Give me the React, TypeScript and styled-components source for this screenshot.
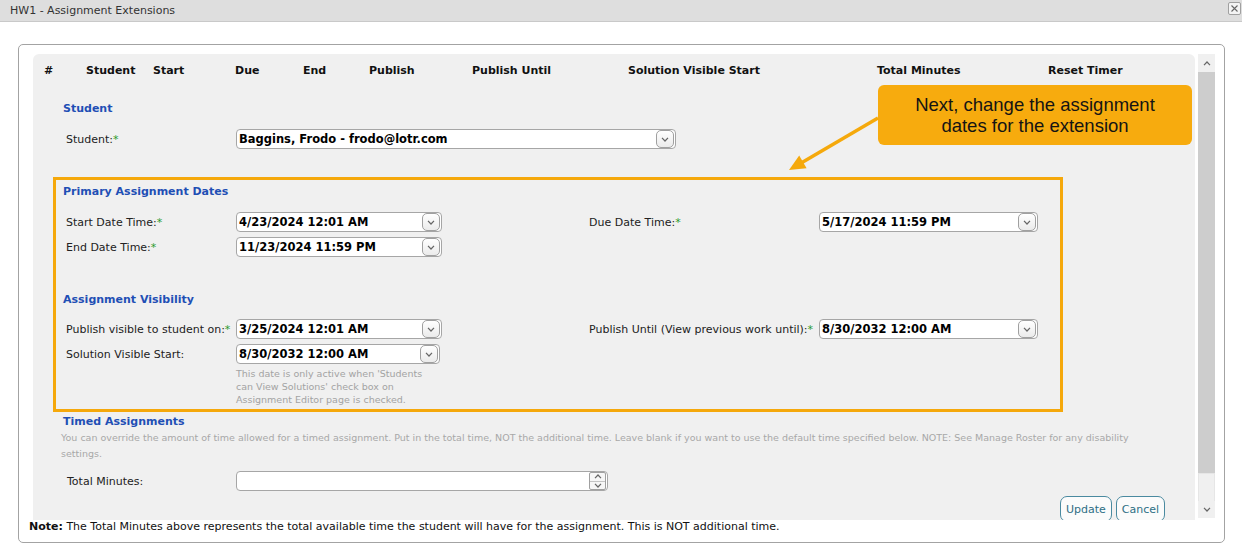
import React from 'react';
import styled, { createGlobalStyle } from 'styled-components';

const GlobalStyle = createGlobalStyle`
  html, body {
    margin: 0;
    padding: 0;
    background: #fff;
  }
  body {
    font-family: 'DejaVu Sans', Verdana, sans-serif;
    font-size: 11px;
    color: #222;
  }
  * {
    box-sizing: border-box;
  }
`;

const Chevron = ({ up }: { up?: boolean }) => (
  <svg width="8" height="5" viewBox="0 0 8 5">
    <path
      d={up ? 'M1 4.2 L4 1 L7 4.2' : 'M1 0.8 L4 4 L7 0.8'}
      fill="none"
      stroke="#666"
      strokeWidth="1.2"
    />
  </svg>
);

function DateSelect({ value, width }: { value: string; width: number }) {
  return (
    <SelectBox $width={width}>
      <SelectValue>{value}</SelectValue>
      <DropButton>
        <Chevron />
      </DropButton>
    </SelectBox>
  );
}

function Label({ text, required }: { text: string; required?: boolean }) {
  return (
    <FieldLabel>
      {text}
      {required && <Req>*</Req>}
    </FieldLabel>
  );
}

const columns = [
  '#',
  'Student',
  'Start',
  'Due',
  'End',
  'Publish',
  'Publish Until',
  'Solution Visible Start',
  'Total Minutes',
  'Reset Timer',
];

export default function App() {
  return (
    <>
      <GlobalStyle />
      <TitleBar>
        <TitleText>HW1 - Assignment Extensions</TitleText>
        <CloseButton>
          <svg width="9" height="9" viewBox="0 0 9 9">
            <path d="M1.5 1.5 L7.5 7.5 M7.5 1.5 L1.5 7.5" stroke="#666" strokeWidth="1.1" />
          </svg>
        </CloseButton>
      </TitleBar>

      <Dialog>
        <ScrollArea>
          <Panel>
            <HeaderRow>
              {columns.map((c) => (
                <span key={c}>{c}</span>
              ))}
            </HeaderRow>

            <Body>
              <Section>
                <SectionTitle>Student</SectionTitle>
                <FieldRow $cols="170px 440px" $top={12}>
                  <Label text="Student:" required />
                  <DateSelect value="Baggins, Frodo - frodo@lotr.com" width={440} />
                </FieldRow>
              </Section>

              <DatesBox>
                <SectionTitle $top={0}>Primary Assignment Dates</SectionTitle>
                <FieldRow $top={12}>
                  <Label text="Start Date Time:" required />
                  <DateSelect value="4/23/2024 12:01 AM" width={206} />
                  <span />
                  <Label text="Due Date Time:" required />
                  <DateSelect value="5/17/2024 11:59 PM" width={219} />
                </FieldRow>
                <FieldRow $top={5}>
                  <Label text="End Date Time:" required />
                  <DateSelect value="11/23/2024 11:59 PM" width={206} />
                </FieldRow>

                <SectionTitle $top={35}>Assignment Visibility</SectionTitle>
                <FieldRow $top={11}>
                  <Label text="Publish visible to student on:" required />
                  <DateSelect value="3/25/2024 12:01 AM" width={206} />
                  <span />
                  <Label text="Publish Until (View previous work until):" required />
                  <DateSelect value="8/30/2032 12:00 AM" width={219} />
                </FieldRow>
                <FieldRow $top={5}>
                  <Label text="Solution Visible Start:" />
                  <DateSelect value="8/30/2032 12:00 AM" width={204} />
                </FieldRow>
                <Hint>
                  This date is only active when 'Students
                  <br />
                  can View Solutions' check box on
                  <br />
                  Assignment Editor page is checked.
                </Hint>
              </DatesBox>

              <Section>
                <SectionTitle $top={2}>Timed Assignments</SectionTitle>
                <OverrideText>
                  You can override the amount of time allowed for a timed assignment. Put in the total
                  time, NOT the additional time. Leave blank if you want to use the default time
                  specified below. NOTE: See Manage Roster for any disability
                  <br />
                  settings.
                </OverrideText>
                <FieldRow $cols="169px 372px" $top={9} $pad={4}>
                  <FieldLabel>Total Minutes:</FieldLabel>
                  <NumberBox>
                    <Spinner>
                      <SpinHalf>
                        <Chevron up />
                      </SpinHalf>
                      <SpinHalf>
                        <Chevron />
                      </SpinHalf>
                    </Spinner>
                  </NumberBox>
                </FieldRow>
              </Section>

              <Actions>
                <ActionButton>Update</ActionButton>
                <ActionButton>Cancel</ActionButton>
              </Actions>
            </Body>

            <Callout>
              Next, change the assignment
              <br />
              dates for the extension
            </Callout>
            <Arrow width="100" height="66" viewBox="0 0 100 66">
              <line x1="93" y1="6" x2="17" y2="50.4" stroke="#f5a90c" strokeWidth="3.5" />
              <polygon points="4,58 21.6,56.2 14.2,43.6" fill="#f5a90c" />
            </Arrow>
          </Panel>

          <Scrollbar>
            <ScrollArrow $h={18}>
              <Chevron up />
            </ScrollArrow>
            <Thumb />
            <Track />
            <ScrollArrow $h={17}>
              <Chevron />
            </ScrollArrow>
          </Scrollbar>
        </ScrollArea>

        <Note>
          <b>Note:</b> The Total Minutes above represents the total available time the student will
          have for the assignment. This is NOT additional time.
        </Note>
      </Dialog>
    </>
  );
}

const TitleBar = styled.div`
  height: 22px;
  display: flex;
  align-items: center;
  justify-content: space-between;
  padding: 0 1px 0 10px;
  background-color: #dedede;
  border-bottom: 1px solid #c9c9c9;
`;

const TitleText = styled.div`
  font-size: 11px;
  color: #333;
`;

const CloseButton = styled.div`
  width: 13px;
  height: 13px;
  margin-top: -4px;
  border: 1px solid #a0a0a0;
  border-radius: 2px;
  background: #f4f4f4;
  display: flex;
  align-items: center;
  justify-content: center;
`;

const Dialog = styled.div`
  margin: 22px 0 0 18px;
  width: 1207px;
  height: 499px;
  border: 1px solid #a3a3a3;
  border-radius: 5px;
  padding: 9px 9px 0 14px;
  background: #fff;
`;

const ScrollArea = styled.div`
  display: flex;
  gap: 3px;
  height: 466px;
`;

const Panel = styled.div`
  position: relative;
  flex: 1;
  background-color: #f0f0f0;
  border-radius: 6px 6px 0 0;
  overflow: hidden;
`;

const HeaderRow = styled.div`
  display: grid;
  grid-template-columns: 42px 67px 82px 68px 66px 103px 156px 249px 171px auto;
  align-items: center;
  height: 33px;
  padding-left: 11px;
  font-size: 11px;
  font-weight: bold;
  color: #111;
`;

const Body = styled.div`
  padding-left: 20px;
`;

const Section = styled.div`
  padding-left: 10px;
`;

const SectionTitle = styled.div<{ $top?: number }>`
  margin-top: ${(p) => p.$top ?? 14}px;
  line-height: 16px;
  font-size: 11px;
  font-weight: bold;
  color: #1f4fb5;
`;

const FieldRow = styled.div<{ $cols?: string; $top?: number; $pad?: number }>`
  display: grid;
  grid-template-columns: ${(p) => p.$cols ?? '170px 206px 147px 230px 219px'};
  align-items: center;
  height: 20px;
  margin-top: ${(p) => p.$top ?? 0}px;
  padding-left: ${(p) => p.$pad ?? 3}px;
`;

const FieldLabel = styled.div`
  font-size: 11px;
  color: #222;
  white-space: nowrap;
`;

const Req = styled.span`
  color: #2b9b2b;
`;

const SelectBox = styled.div<{ $width: number }>`
  width: ${(p) => p.$width}px;
  height: 20px;
  display: flex;
  align-items: center;
  background: #fff;
  border: 1px solid #a6a6a6;
  border-radius: 4px;
`;

const SelectValue = styled.div`
  flex: 1;
  padding-left: 2px;
  font-size: 11.5px;
  font-weight: bold;
  color: #000;
  white-space: nowrap;
  overflow: hidden;
`;

const DropButton = styled.div`
  width: 18px;
  height: 18px;
  margin-right: 1px;
  border: 1px solid #a0a0a0;
  border-radius: 5px;
  background: linear-gradient(#ffffff, #ebebeb);
  display: flex;
  align-items: center;
  justify-content: center;
`;

const DatesBox = styled.div`
  margin-top: 28px;
  width: 1010px;
  border: 3px solid #f5a80b;
  padding: 4px 7px 3px;
`;

const Hint = styled.div`
  margin-top: 3px;
  padding-left: 173px;
  font-size: 9.5px;
  line-height: 13px;
  color: #a3a3a3;
`;

const OverrideText = styled.div`
  margin-left: -2px;
  font-size: 9.5px;
  line-height: 16px;
  color: #a8a8a8;
`;

const NumberBox = styled.div`
  width: 372px;
  height: 20px;
  display: flex;
  justify-content: flex-end;
  align-items: center;
  background: #fff;
  border: 1px solid #a6a6a6;
  border-radius: 4px;
  padding-right: 1px;
`;

const Spinner = styled.div`
  width: 17px;
  height: 18px;
  display: flex;
  flex-direction: column;
  border: 1px solid #a0a0a0;
  border-radius: 2px;
  background: #f6f6f6;
`;

const SpinHalf = styled.div`
  flex: 1;
  display: flex;
  align-items: center;
  justify-content: center;
  & + & {
    border-top: 1px solid #c4c4c4;
  }
`;

const Actions = styled.div`
  display: flex;
  justify-content: flex-end;
  gap: 4px;
  margin-top: 5px;
  padding-right: 30px;
`;

const ActionButton = styled.button`
  height: 26px;
  padding: 0 5px;
  font-family: 'DejaVu Sans', Verdana, sans-serif;
  font-size: 11px;
  color: #2d6f85;
  background: #fbfbfb;
  border: 1px solid #4a8aa0;
  border-radius: 7px;
`;

const Callout = styled.div`
  position: absolute;
  left: 845px;
  top: 31px;
  width: 314px;
  height: 60px;
  padding-top: 9px;
  border-radius: 6px;
  background-color: #f7ab0e;
  font-family: 'Liberation Sans', Arial, sans-serif;
  font-size: 18.5px;
  line-height: 21px;
  text-align: center;
  color: #141414;
`;

const Arrow = styled.svg`
  position: absolute;
  left: 752px;
  top: 58px;
`;

const Scrollbar = styled.div`
  width: 17px;
  display: flex;
  flex-direction: column;
  background: #f0f0f0;
  height: 464px;
`;

const ScrollArrow = styled.div<{ $h: number }>`
  height: ${(p) => p.$h}px;
  display: flex;
  align-items: center;
  justify-content: center;
`;

const Thumb = styled.div`
  height: 401px;
  background-color: #cdcdcd;
`;

const Track = styled.div`
  flex: 1;
  border: 1px solid #e6e6e6;
  border-bottom: none;
`;

const Note = styled.div`
  margin-left: -4px;
  font-size: 11px;
  line-height: 13px;
  color: #111;
`;
